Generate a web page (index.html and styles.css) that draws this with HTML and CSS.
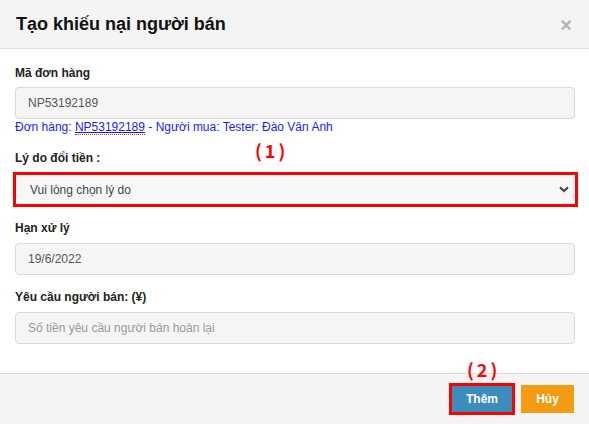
FILE: index.html
```html
<!DOCTYPE html>
<html lang="vi">
<head>
<meta charset="utf-8">
<link rel="stylesheet" href="styles.css">
</head>
<body>
<div class="modal">
  <div class="modal-header">
    <h4 class="title">Tạo khiếu nại người bán</h4>
    <span class="close">×</span>
  </div>
  <div class="modal-body">
    <div class="group">
      <label class="lbl">Mã đơn hàng</label>
      <div class="field">NP53192189</div>
      <div class="help">Đơn hàng: <span class="link">NP53192189</span> - Người mua: Tester: Đào Vân Anh</div>
    </div>
    <div class="group group-sel">
      <label class="lbl">Lý do đổi tiền :</label>
      <span class="note note1">(1)</span>
      <div class="mark">
        <div class="select">
          <span>Vui lòng chọn lý do</span>
          <svg class="chev" width="10" height="7" viewBox="0 0 10 7"><path d="M1 1.2 L5 5 L9 1.2" fill="none" stroke="#444" stroke-width="2"/></svg>
        </div>
      </div>
    </div>
    <div class="group group-date">
      <label class="lbl lbl6">Hạn xử lý</label>
      <div class="field">19/6/2022</div>
    </div>
    <div class="group last">
      <label class="lbl lbl6">Yêu cầu người bán: (¥)</label>
      <div class="field placeholder">Số tiền yêu cầu người bán hoàn lại</div>
    </div>
  </div>
  <div class="modal-footer">
    <span class="note note2">(2)</span>
    <div class="mark mark-btn"><button class="btn btn-primary">Thêm</button></div>
    <button class="btn btn-warning">Hủy</button>
  </div>
</div>
</body>
</html>
```
FILE: styles.css
```css
* { box-sizing: border-box; }
html, body { margin: 0; padding: 0; background: #fff; }
body {
  font-family: "Liberation Sans", Arial, sans-serif;
  font-size: 12px;
  color: #333;
}
.modal {
  width: 589px;
  height: 424px;
  display: flex;
  flex-direction: column;
  position: relative;
}
.modal-header {
  height: 49px;
  background: #f4f4f4;
  border-bottom: 1px solid #dcdcdc;
  padding: 1px 15px 0 16px;
  display: flex;
  align-items: center;
  justify-content: space-between;
}
.title {
  margin: 0;
  font-size: 18px;
  font-weight: bold;
  color: #111;
}
.close {
  font-size: 20px;
  font-weight: bold;
  color: #b5b5b5;
  line-height: 1;
  margin-right: 2px;
}
.modal-body {
  flex: 1;
  padding: 15px 14px 0 15px;
  position: relative;
}
.group { margin-bottom: 14px; position: relative; }
.group-sel { margin-bottom: 12px; }
.group-date { margin-bottom: 13px; }
.lbl {
  display: block;
  font-weight: bold;
  font-size: 12px;
  line-height: 18px;
  color: #222;
  margin-bottom: 5px;
}
.lbl6 { margin-bottom: 6px; }
.field {
  height: 32px;
  background: #f5f5f5;
  border: 1px solid #d9d9d9;
  border-radius: 4px;
  padding: 0 12px;
  display: flex;
  align-items: center;
  color: #555;
  font-size: 12px;
}
.field.placeholder { color: #9a9a9a; }
.help {
  color: #1a1aff;
  font-size: 12px;
  line-height: 15px;
  margin-top: 1px;
}
.link {
  text-decoration: underline;
  text-decoration-color: #1a1aff;
  border-bottom: 1px dotted #e33;
}
.mark {
  border: 3px solid #f00;
  margin: 0 -3px 0 -2px;
}
.select {
  height: 29px;
  background: #f7f7f7;
  display: flex;
  align-items: center;
  justify-content: space-between;
  padding: 0 6px 0 14px;
  color: #444;
  font-size: 12px;
}
.chev { display: block; }
.note {
  position: absolute;
  color: #f00;
  font-family: "Noto Sans CJK JP", "Liberation Mono", monospace;
  font-size: 18px;
  font-weight: bold;
  letter-spacing: 3px;
  line-height: 20px;
}
.note1 { left: 240px; top: -9px; }
.note2 { left: 467px; top: -15px; }
.modal-footer {
  height: 51px;
  background: #f4f4f4;
  border-top: 1px solid #dcdcdc;
  padding: 0 15px 0 0;
  display: flex;
  align-items: center;
  justify-content: flex-end;
  gap: 6px;
  position: relative;
}
.mark-btn { margin: 0; }
.btn {
  border: none;
  height: 28px;
  font-family: "Liberation Sans", Arial, sans-serif;
  font-size: 12px;
  font-weight: bold;
  color: #fff;
  padding: 0;
  display: block;
}
.btn-primary { background: #3c8dbc; width: 60px; height: 26px; }
.btn-warning { background: #f39c12; width: 53px; }
```
